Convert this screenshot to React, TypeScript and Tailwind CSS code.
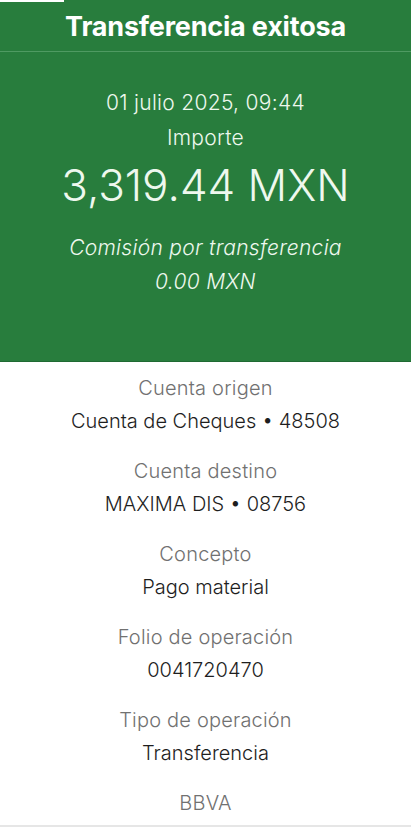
const rows = [
  { label: "Cuenta origen", value: "Cuenta de Cheques • 48508" },
  { label: "Cuenta destino", value: "MAXIMA DIS • 08756" },
  { label: "Concepto", value: "Pago material" },
  { label: "Folio de operación", value: "0041720470" },
  { label: "Tipo de operación", value: "Transferencia" },
];

export default function App() {
  return (
    <div
      className="relative w-[411px] h-[828px] bg-white overflow-hidden flex flex-col"
      style={{ fontFamily: "Inter, 'Noto Sans', sans-serif" }}
    >
      <div className="absolute left-0 top-0 w-[64px] h-[2px] bg-white" />

      <div className="bg-[#287d3d] text-[#eef8ee] h-[362px] flex flex-col border-b border-[#1f6a32]">
        <div className="h-[52px] flex items-center justify-center pt-[4px] border-b border-[#4f9a62]">
          <h1 className="text-[27px] font-bold tracking-[-0.2px] text-white">Transferencia exitosa</h1>
        </div>
        <div className="flex flex-col items-center pt-[38px]">
          <p className="text-[21px] font-light tracking-[0.3px] leading-[26px]">01 julio 2025, 09:44</p>
          <p className="text-[21px] font-light tracking-[0.3px] leading-[26px] mt-[9px]">Importe</p>
          <p className="text-[44px] font-light leading-[52px] mt-[8px]">3,319.44 MXN</p>
          <p className="text-[21px] font-light italic tracking-[0.3px] leading-[26px] mt-[24px]">Comisión por transferencia</p>
          <p className="text-[21px] font-light italic tracking-[0.3px] leading-[26px] mt-[8px]">0.00 MXN</p>
        </div>
      </div>

      <div className="flex-1 flex flex-col items-center pt-[13px]">
        {rows.map((r) => (
          <div key={r.label} className="flex flex-col items-center h-[83px]">
            <p className="text-[20px] font-light tracking-[0.2px] text-[#717171] leading-[26px]">{r.label}</p>
            <p className="text-[20px] font-light text-[#1e1e1e] leading-[26px] mt-[7px]">{r.value}</p>
          </div>
        ))}
        <p className="text-[20px] font-light tracking-[0.2px] text-[#717171] leading-[26px]">BBVA</p>
      </div>
      <div className="h-[2px] bg-[#e6e6e6] mb-[1px]" />
    </div>
  );
}
